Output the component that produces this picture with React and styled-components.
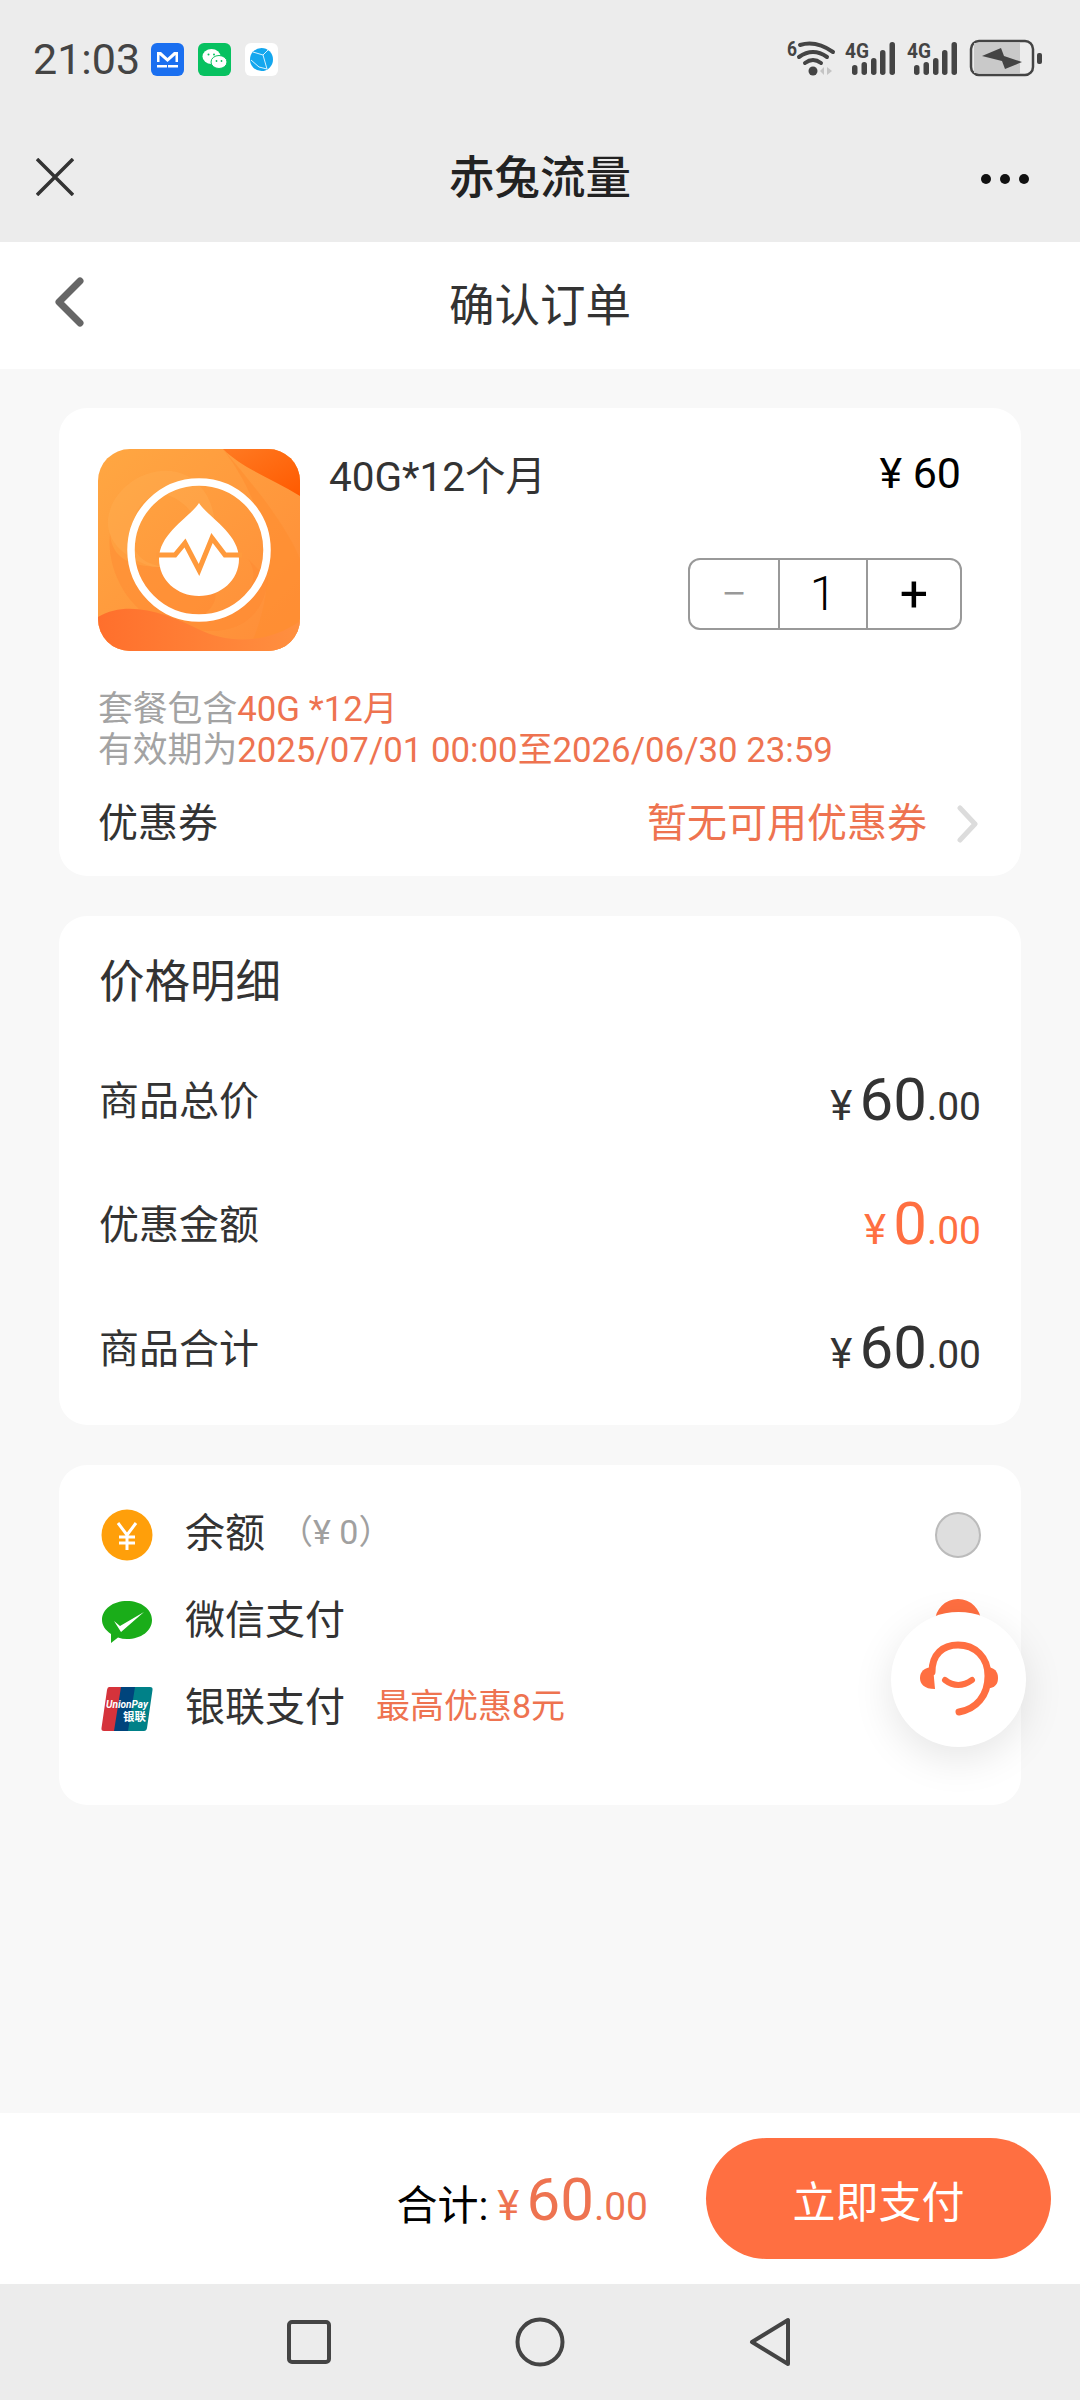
import React from 'react';
import styled, { createGlobalStyle } from 'styled-components';

const Global = createGlobalStyle`
  html, body { margin: 0; padding: 0; background: #f8f8f8; }
  body { font-family: Roboto, "Noto Sans CJK SC", sans-serif; }
  * { box-sizing: border-box; }
`;

const ORANGE = '#ee7350';
const STRONG = '#ff6f41';

const Page = styled.div`
  position: relative;
  width: 1080px;
  height: 2400px;
  display: flex;
  flex-direction: column;
  overflow: hidden;
`;
const StatusBar = styled.div`
  height: 120px;
  background: #ececec;
  display: flex;
  align-items: flex-start;
  justify-content: space-between;
  padding: 35px 38px 0 33px;
`;
const StatusLeft = styled.div`
  display: flex;
  align-items: center;
  gap: 14px;
  padding-top: 4px;
`;
const Time = styled.span`
  font-size: 43px;
  line-height: 40px;
  color: #444;
  width: 104px;
`;
const AppIcons = styled.div`
  display: flex;
  gap: 14px;
  height: 33px;
`;
const NavBar = styled.div`
  height: 122px;
  background: #ececec;
  display: grid;
  grid-template-columns: 1fr auto 1fr;
  align-items: center;
  padding-bottom: 8px;
`;
const CloseWrap = styled.span`
  display: flex;
  padding-left: 36px;
`;
const MoreWrap = styled.span`
  display: flex;
  justify-content: flex-end;
  padding: 3px 50px 0 0;
`;
const NavTitle = styled.h1`
  margin: 0 0 6px;
  font-size: 45.5px;
  font-weight: 500;
  color: #222;
`;
const HeaderBar = styled.div`
  height: 127px;
  background: #fff;
  display: grid;
  grid-template-columns: 1fr auto 1fr;
  align-items: center;
  padding-bottom: 8px;
`;
const BackWrap = styled.span`
  display: flex;
  padding-left: 54px;
`;
const HeaderTitle = styled.h2`
  margin: 0;
  font-size: 45.5px;
  font-weight: 400;
  color: #333;
`;
const Main = styled.main`
  flex: 1;
  display: flex;
  flex-direction: column;
  gap: 40px;
  padding: 39px 59px 0;
`;
const Card = styled.section`
  background: #fff;
  border-radius: 28px;
`;
const ProductCard = styled(Card)`
  height: 468px;
  padding: 41px 40px 0 39px;
`;
const ProductTop = styled.div`
  display: flex;
  height: 202px;
`;
const ProductBody = styled.div`
  flex: 1;
  padding-left: 29px;
  display: flex;
  flex-direction: column;
`;
const ProductLine = styled.div`
  display: flex;
  justify-content: space-between;
  align-items: center;
  height: 50px;
`;
const ProductName = styled.span`
  font-size: 40.5px;
  color: #333;
  margin-top: -2px;
`;
const UnitPrice = styled.span`
  font-size: 43px;
  color: #000;
  margin: -2px 20px 0 0;
`;
const Stepper = styled.div`
  align-self: flex-end;
  display: grid;
  grid-template-columns: 88px 88px 1fr;
  width: 274px;
  height: 72px;
  margin: 59px 19px 0 0;
  border: 2px solid #999;
  border-radius: 12px;
`;
const StepCell = styled.div`
  display: flex;
  align-items: center;
  justify-content: center;
  font-size: ${p => p.$size}px;
  font-weight: ${p => p.$weight || 300};
  line-height: 1;
  color: ${p => p.$muted ? '#999' : '#000'};
  border-left: ${p => p.$divided ? '2px solid #999' : 'none'};
`;
const Notes = styled.div`
  margin-top: 38px;
  font-size: 34.8px;
  line-height: 41px;
  color: #a3a3a3;
`;
const Accent = styled.span`
  color: ${ORANGE};
`;
const CouponRow = styled.div`
  display: flex;
  align-items: center;
  justify-content: space-between;
  margin-top: 25px;
  font-size: 40px;
  line-height: 56px;
  color: #333;
`;
const CouponValue = styled.div`
  display: flex;
  align-items: center;
  gap: 30px;
  color: ${ORANGE};
  margin-right: 2px;
`;
const PriceCard = styled(Card)`
  height: 509px;
  padding: 37px 40px 0 40px;
`;
const CardTitle = styled.h3`
  margin: 0 0 23px;
  font-size: 45.5px;
  line-height: 60px;
  font-weight: 400;
  color: #333;
`;
const PriceRow = styled.div`
  display: flex;
  justify-content: space-between;
  align-items: center;
  height: 124px;
  font-size: 40px;
  color: #333;
`;
const Amount = styled.span`
  display: inline-flex;
  align-items: baseline;
  padding-top: 4px;
  color: ${p => p.$accent ? STRONG : p.$color || '#333'};
`;
const Yen = styled.span`
  font-size: 42px;
  margin-right: 7px;
`;
const Whole = styled.span`
  font-size: 60px;
  line-height: 1;
`;
const Cents = styled.span`
  font-size: 39px;
  line-height: 1;
`;
const PayCard = styled(Card)`
  height: 340px;
  padding: 26px 40px 0 42px;
`;
const PayRow = styled.div`
  display: flex;
  align-items: center;
  height: 87px;
`;
const PayIcon = styled.span`
  width: 52px;
  display: flex;
  justify-content: center;
  margin-right: 32px;
`;
const PayName = styled.span`
  font-size: 40px;
  color: #333;
  margin-bottom: 10px;
`;
const PayNote = styled.span`
  font-size: 34px;
  margin: 0 0 10px ${p => p.$gap}px;
  color: ${p => p.$accent ? ORANGE : '#a0a0a0'};
`;
const Radio = styled.span`
  margin-left: auto;
  width: 46px;
  height: 46px;
  border-radius: 50%;
  background: ${p => p.$on ? STRONG : '#dedede'};
  border: 2px solid ${p => p.$on ? STRONG : '#bbb'};
`;
const Float = styled.div`
  position: absolute;
  left: 891px;
  top: 1612px;
  width: 135px;
  height: 135px;
  border-radius: 50%;
  background: #fff;
  box-shadow: 0 12px 40px rgba(0, 0, 0, 0.1);
  display: flex;
`;
const Footer = styled.footer`
  height: 171px;
  background: #fff;
  display: flex;
  align-items: center;
  justify-content: flex-end;
  padding: 0 29px 0 0;
`;
const Total = styled.div`
  display: flex;
  align-items: baseline;
  margin: 0 58px 0 0;
`;
const TotalLabel = styled.span`
  font-size: 41px;
  color: #000;
  margin-right: 9px;
`;
const PayButton = styled.button`
  width: 345px;
  height: 121px;
  border: 0;
  border-radius: 61px;
  background: ${STRONG};
  color: #fff;
  font-family: inherit;
  font-size: 43px;
`;
const SystemNav = styled.div`
  height: 116px;
  background: #ececec;
  display: flex;
  align-items: center;
  padding-left: 286px;
`;
const SysIcon = styled.svg`
  display: block;
  margin-right: ${p => p.$gap || 0}px;
`;

const MailIcon = () => (
  <svg width="33" height="33" viewBox="0 0 33 33">
    <rect width="33" height="33" rx="6" fill="#1a6ff0" />
    <path d="M6 9h4l6.5 6 6.5-6h4v10h-2.5v-7l-8 7-8-7v7H6z" fill="#fff" />
    <rect x="6" y="22" width="10" height="2.5" fill="#fff" />
    <rect x="17" y="22" width="10" height="2.5" fill="#fff" />
  </svg>
);
const WeChatIcon = () => (
  <svg width="33" height="33" viewBox="0 0 33 33">
    <rect width="33" height="33" rx="6" fill="#07c160" />
    <ellipse cx="13.5" cy="13.5" rx="9" ry="7.5" fill="#fff" />
    <ellipse cx="21" cy="19" rx="8" ry="6.5" fill="#fff" stroke="#07c160" strokeWidth="1" />
    <circle cx="10.5" cy="11.5" r="1" fill="#07c160" />
    <circle cx="16" cy="11.5" r="1" fill="#07c160" />
    <circle cx="18.5" cy="18" r="0.9" fill="#07c160" />
    <circle cx="23.5" cy="18" r="0.9" fill="#07c160" />
  </svg>
);
const GlobeIcon = () => (
  <svg width="33" height="33" viewBox="0 0 33 33">
    <rect width="33" height="33" rx="6" fill="#fff" />
    <circle cx="16.5" cy="16.5" r="11.5" fill="#14a7ee" />
    <path d="M8 9 L18 12 L23 7 M18 12 L22 26 M6 17 L14 24 L22 26" fill="none" stroke="#d8f2ff" strokeWidth="1" />
  </svg>
);
const StatusIcons = () => (
  <svg width="256" height="42" viewBox="786 34 256 42">
    <text x="787" y="55" fontFamily="Roboto" fontWeight="700" fontSize="20" fill="#444" textLength="10" lengthAdjust="spacingAndGlyphs">6</text>
    <g fill="none" stroke="#444" strokeWidth="4" strokeLinecap="round">
      <path d="M800 44 Q816 39 833 51" />
      <path d="M799 56 Q813 46 827 56" />
      <path d="M805 62 Q813 56 821 62" />
    </g>
    <circle cx="813" cy="70" r="4.5" fill="#444" />
    <path d="M824 66 l-4 4 4 4z M827 66 l5 4 -5 4z" fill="#c4c4c4" />
    {[845, 907].map(x => (
      <g key={x} fill="#444">
        <text x={x} y="57" fontFamily="Roboto" fontWeight="700" fontSize="21" textLength="24" lengthAdjust="spacingAndGlyphs">4G</text>
        <rect x={x + 7} y="64" width="5.5" height="10" rx="2.7" />
        <rect x={x + 16.5} y="61" width="5.5" height="13" rx="2.7" />
        <rect x={x + 26} y="57" width="5.5" height="17" rx="2.7" />
        <rect x={x + 35} y="49" width="5.5" height="25" rx="2.7" />
        <rect x={x + 44.5} y="41" width="5.5" height="33" rx="2.7" />
      </g>
    ))}
    <rect x="971" y="40" width="62" height="34" rx="8" fill="#ececec" stroke="#444" strokeWidth="2.5" />
    <path d="M974 42 H1020 V72 H974 Z" fill="#c9c9c9" />
    <path d="M982 55 L1001 47 L1004 55 L1022 61 L1005 68 L1002 60 Z" fill="#444" />
    <rect x="1037" y="52" width="5" height="11" rx="2" fill="#444" />
  </svg>
);

const ProductLogo = () => (
  <svg width="202" height="202" viewBox="0 0 202 202">
    <defs>
      <linearGradient id="lg-base" x1="0" y1="0" x2="1" y2="1">
        <stop offset="0" stopColor="#ffa742" />
        <stop offset="1" stopColor="#ff8c38" />
      </linearGradient>
      <linearGradient id="lg-wave" x1="0" y1="0" x2="1" y2="0">
        <stop offset="0" stopColor="#ff6f2c" />
        <stop offset="1" stopColor="#ff9040" />
      </linearGradient>
      <linearGradient id="lg-corner" x1="0" y1="0" x2="1" y2="1">
        <stop offset="0" stopColor="#ff7a22" />
        <stop offset="1" stopColor="#ff5a00" />
      </linearGradient>
      <clipPath id="lg-clip"><rect width="202" height="202" rx="32" /></clipPath>
    </defs>
    <g clipPath="url(#lg-clip)">
      <rect width="202" height="202" fill="url(#lg-base)" />
      <path d="M125 0 C150 30 185 70 202 110 V202 H150 C185 130 170 60 125 0 Z" fill="#ff8d30" opacity="0.6" />
      <path d="M125 0 H202 V47 C175 30 145 20 125 0 Z" fill="url(#lg-corner)" />
      <path d="M10 70 C15 30 70 5 100 35 C120 55 120 85 110 105 C105 75 90 50 65 45 C40 45 30 75 35 95 C40 115 60 118 75 118 L55 118 C30 110 8 95 10 70 Z" fill="#ffb45a" opacity="0.3" />
      <path d="M12 85 C15 120 50 118 80 118 C120 130 130 150 100 170 C150 160 165 130 150 110 L170 130 C165 175 130 190 85 178 L60 172 C30 160 8 120 12 85 Z" fill="#ff8a32" opacity="0.5" />
      <path d="M0 168 C30 150 70 165 100 180 C130 195 170 195 202 172 V202 H0 Z" fill="url(#lg-wave)" />
      <circle cx="101" cy="101" r="68" fill="none" stroke="#fff" strokeWidth="7.5" />
      <path d="M101 54 C110 68 141 84 141 110 C141 131 123 147 101 147 C79 147 61 131 61 110 C61 84 92 68 101 54 Z" fill="#fff" />
      <path d="M58 106 H77 L87 94 L101 121 L114 89 L127 106 H144" fill="none" stroke="#ff9a3c" strokeWidth="5" />
    </g>
  </svg>
);
const ChevronRight = () => (
  <svg width="22" height="38" viewBox="0 0 22 38">
    <path d="M3 3 L18 19 L3 35" fill="none" stroke="#dcdcdc" strokeWidth="5" strokeLinecap="round" strokeLinejoin="round" />
  </svg>
);
const YenBadge = () => (
  <svg width="52" height="52" viewBox="0 0 52 52">
    <circle cx="26" cy="26" r="25.5" fill="#ff9f0a" />
    <path d="M17 14 L26 26 L35 14 M26 26 V41 M18 28 H34 M18 34 H34" fill="none" stroke="#fff" strokeWidth="3" />
  </svg>
);
const WechatPay = () => (
  <svg width="52" height="44" viewBox="0 0 52 44">
    <path d="M26 1 C40 1 51 9 51 20 C51 31 40 39 26 39 C23 39 20 38.5 17 37.5 L10 43 L10 34 C4 30 1 25 1 20 C1 9 12 1 26 1 Z" fill="#1aad19" />
    <path d="M13 21 L19 26 L43 12 L20 32 Z" fill="#fff" />
  </svg>
);
const UnionPay = () => (
  <svg width="52" height="44" viewBox="0 0 52 44">
    <path d="M8 0 H24 L17 44 H3 Q0 44 .5 41 L6 3 Q6.5 0 8 0Z" fill="#d5333b" />
    <path d="M20 0 H38 L31 44 H13 Z" fill="#00447c" />
    <path d="M34 0 H49 Q52 0 51.5 3 L46 41 Q45.5 44 43 44 H27 Z" fill="#008188" />
    <text x="5" y="21" fontFamily="Roboto" fontWeight="700" fontStyle="italic" fontSize="11" fill="#fff" textLength="42" lengthAdjust="spacingAndGlyphs">UnionPay</text>
    <text x="22" y="34" fontFamily='"Noto Sans CJK SC"' fontWeight="700" fontSize="11" fill="#fff" textLength="23" lengthAdjust="spacingAndGlyphs">银联</text>
  </svg>
);
const Headset = () => (
  <svg width="135" height="135" viewBox="0 0 135 135">
    <g fill="none" stroke="#ff6f41" strokeLinecap="round">
      <path d="M41 60 C41 42 52 33 67 33 C84 33 97 45 97 64 C97 84 85 97 68 100" strokeWidth="7" />
      <path d="M54 68 Q67 78 81 68" strokeWidth="6" />
    </g>
    <path d="M42 55 C33 55 29 60 29 66 C29 72 33 77 44 77 Z" fill="#ff6f41" />
    <path d="M95 55 C104 55 107 60 107 66 C107 72 104 77 95 76 Z" fill="#ff6f41" />
  </svg>
);

const Money = ({ whole, accent, color }) => (
  <Amount $accent={accent} $color={color}>
    <Yen>¥</Yen>
    <Whole>{whole}</Whole>
    <Cents>.00</Cents>
  </Amount>
);

export default function App() {
  return (
    <Page>
      <Global />
      <StatusBar>
        <StatusLeft>
          <Time>21:03</Time>
          <AppIcons>
            <MailIcon />
            <WeChatIcon />
            <GlobeIcon />
          </AppIcons>
        </StatusLeft>
        <StatusIcons />
      </StatusBar>
      <NavBar>
        <CloseWrap>
          <svg width="38" height="38" viewBox="0 0 38 38">
            <path d="M1 1 L37 37 M37 1 L1 37" stroke="#333" strokeWidth="3.5" fill="none" />
          </svg>
        </CloseWrap>
        <NavTitle>赤兔流量</NavTitle>
        <MoreWrap>
          <svg width="50" height="12" viewBox="0 0 50 12">
            <circle cx="6" cy="6" r="5" fill="#111" />
            <circle cx="25" cy="6" r="5" fill="#111" />
            <circle cx="44" cy="6" r="5" fill="#111" />
          </svg>
        </MoreWrap>
      </NavBar>
      <HeaderBar>
        <BackWrap>
          <svg width="30" height="50" viewBox="0 0 30 50">
            <path d="M26 4 L5 25 L26 46" fill="none" stroke="#666" strokeWidth="7" strokeLinecap="round" strokeLinejoin="round" />
          </svg>
        </BackWrap>
        <HeaderTitle>确认订单</HeaderTitle>
        <span />
      </HeaderBar>
      <Main>
        <ProductCard>
          <ProductTop>
            <ProductLogo />
            <ProductBody>
              <ProductLine>
                <ProductName>40G*12个月</ProductName>
                <UnitPrice>¥ 60</UnitPrice>
              </ProductLine>
              <Stepper>
                <StepCell $muted $size={46}>−</StepCell>
                <StepCell $divided $size={48}>1</StepCell>
                <StepCell $divided $size={50} $weight={400}>+</StepCell>
              </Stepper>
            </ProductBody>
          </ProductTop>
          <Notes>
            <div>套餐包含<Accent>40G *12月</Accent></div>
            <div>有效期为<Accent>2025/07/01 00:00至2026/06/30 23:59</Accent></div>
          </Notes>
          <CouponRow>
            <span>优惠券</span>
            <CouponValue>
              <span>暂无可用优惠券</span>
              <ChevronRight />
            </CouponValue>
          </CouponRow>
        </ProductCard>
        <PriceCard>
          <CardTitle>价格明细</CardTitle>
          <PriceRow><span>商品总价</span><Money whole="60" /></PriceRow>
          <PriceRow><span>优惠金额</span><Money whole="0" accent /></PriceRow>
          <PriceRow><span>商品合计</span><Money whole="60" /></PriceRow>
        </PriceCard>
        <PayCard>
          <PayRow>
            <PayIcon><YenBadge /></PayIcon>
            <PayName>余额</PayName>
            <PayNote $gap={14}>（¥ 0）</PayNote>
            <Radio />
          </PayRow>
          <PayRow>
            <PayIcon><WechatPay /></PayIcon>
            <PayName>微信支付</PayName>
            <Radio $on />
          </PayRow>
          <PayRow>
            <PayIcon><UnionPay /></PayIcon>
            <PayName>银联支付</PayName>
            <PayNote $gap={31} $accent>最高优惠8元</PayNote>
            <Radio />
          </PayRow>
        </PayCard>
      </Main>
      <Footer>
        <Total>
          <TotalLabel>合计:</TotalLabel>
          <Money whole="60" color="#ee7350" />
        </Total>
        <PayButton>立即支付</PayButton>
      </Footer>
      <SystemNav>
        <SysIcon $gap={183} width="46" height="46" viewBox="0 0 46 46">
          <rect x="3" y="3" width="40" height="40" rx="3" fill="none" stroke="#444" strokeWidth="4" />
        </SysIcon>
        <SysIcon $gap={183} width="50" height="50" viewBox="0 0 50 50">
          <circle cx="25" cy="25" r="22.5" fill="none" stroke="#444" strokeWidth="4" />
        </SysIcon>
        <SysIcon width="44" height="52" viewBox="0 0 44 52">
          <path d="M40 4 V48 L4 26 Z" fill="none" stroke="#444" strokeWidth="4" strokeLinejoin="round" />
        </SysIcon>
      </SystemNav>
      <Float><Headset /></Float>
    </Page>
  );
}
